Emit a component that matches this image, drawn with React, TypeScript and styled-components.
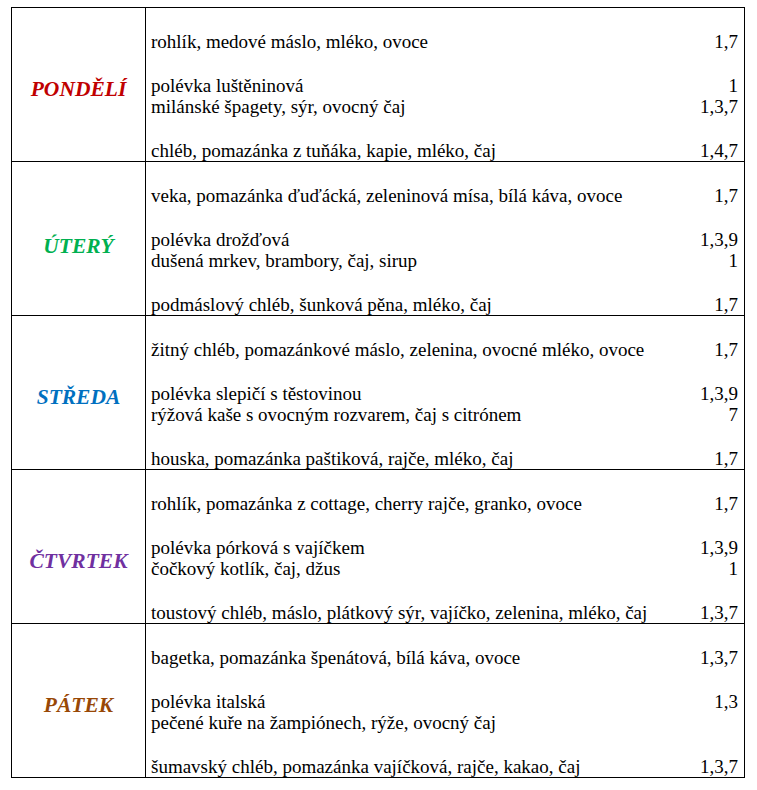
import React from "react";
import styled, { createGlobalStyle } from "styled-components";

const Global = createGlobalStyle`
  html, body { margin: 0; padding: 0; background: #ffffff; }
  body { font-family: "Liberation Serif", "Times New Roman", serif; color: #000; }
`;

const Page = styled.div`
  padding: 7px 0 0 11px;
  font-family: "Liberation Serif", "Times New Roman", serif;
`;

const Table = styled.div`
  box-sizing: border-box;
  width: 734px;
  border: 1px solid #000;
  display: flex;
  flex-direction: column;
`;

const DayRow = styled.div<{ $first?: boolean }>`
  display: grid;
  grid-template-columns: 134px 1fr;
  border-top: ${(p) => (p.$first ? "none" : "1px solid #000")};
  height: 153px;
  box-sizing: content-box;
`;

const LabelCell = styled.div<{ $drop: number }>`
  border-right: 1px solid #000;
  display: flex;
  align-items: center;
  justify-content: center;
  padding-top: ${(p) => p.$drop}px;
  box-sizing: border-box;
`;

const DayName = styled.span<{ $color: string }>`
  font-family: "Liberation Serif", "Times New Roman", serif;
  font-weight: bold;
  font-style: italic;
  font-size: 21.5px;
  color: ${(p) => p.$color};
`;

const MenuCell = styled.div`
  display: flex;
  flex-direction: column;
  padding: 1px 6px 0 5px;
`;

const Line = styled.div`
  display: flex;
  justify-content: space-between;
  font-family: "Liberation Serif", "Times New Roman", serif;
  font-size: 19px;
  line-height: 21.86px;
  height: 21.86px;
  white-space: nowrap;
  color: #000;
`;

const Meal = styled.span``;
const Allergens = styled.span``;

type Item = [string, string];

interface Day {
  name: string;
  color: string;
  drop: number;
  breakfast: Item;
  soup: Item;
  main: Item;
  snack: Item;
}

const days: Day[] = [
  {
    name: "PONDĚLÍ",
    color: "#c00000",
    drop: 9,
    breakfast: ["rohlík, medové máslo, mléko, ovoce", "1,7"],
    soup: ["polévka luštěninová", "1"],
    main: ["milánské špagety, sýr, ovocný čaj", "1,3,7"],
    snack: ["chléb, pomazánka z tuňáka, kapie, mléko, čaj", "1,4,7"],
  },
  {
    name: "ÚTERÝ",
    color: "#00b050",
    drop: 15,
    breakfast: ["veka, pomazánka ďuďácká, zeleninová mísa, bílá káva, ovoce", "1,7"],
    soup: ["polévka drožďová", "1,3,9"],
    main: ["dušená mrkev, brambory, čaj, sirup", "1"],
    snack: ["podmáslový chléb, šunková pěna, mléko, čaj", "1,7"],
  },
  {
    name: "STŘEDA",
    color: "#0070c0",
    drop: 9,
    breakfast: ["žitný chléb, pomazánkové máslo, zelenina, ovocné mléko, ovoce", "1,7"],
    soup: ["polévka slepičí s těstovinou", "1,3,9"],
    main: ["rýžová kaše s ovocným rozvarem, čaj s citrónem", "7"],
    snack: ["houska, pomazánka paštiková, rajče, mléko, čaj", "1,7"],
  },
  {
    name: "ČTVRTEK",
    color: "#7030a0",
    drop: 29,
    breakfast: ["rohlík, pomazánka z cottage, cherry rajče, granko, ovoce", "1,7"],
    soup: ["polévka pórková s vajíčkem", "1,3,9"],
    main: ["čočkový kotlík, čaj, džus", "1"],
    snack: ["toustový chléb, máslo, plátkový sýr, vajíčko, zelenina, mléko, čaj", "1,3,7"],
  },
  {
    name: "PÁTEK",
    color: "#984806",
    drop: 9,
    breakfast: ["bagetka, pomazánka špenátová, bílá káva, ovoce", "1,3,7"],
    soup: ["polévka italská", "1,3"],
    main: ["pečené kuře na žampiónech, rýže, ovocný čaj", ""],
    snack: ["šumavský chléb, pomazánka vajíčková, rajče, kakao, čaj", "1,3,7"],
  },
];

const MenuLine: React.FC<{ item?: Item }> = ({ item }) => (
  <Line>
    <Meal>{item ? item[0] : "\u00a0"}</Meal>
    <Allergens>{item ? item[1] : ""}</Allergens>
  </Line>
);

export default function App() {
  return (
    <>
      <Global />
      <Page>
        <Table>
          {days.map((d, i) => (
            <DayRow key={d.name} $first={i === 0}>
              <LabelCell $drop={d.drop}>
                <DayName $color={d.color}>{d.name}</DayName>
              </LabelCell>
              <MenuCell>
                <MenuLine />
                <MenuLine item={d.breakfast} />
                <MenuLine />
                <MenuLine item={d.soup} />
                <MenuLine item={d.main} />
                <MenuLine />
                <MenuLine item={d.snack} />
              </MenuCell>
            </DayRow>
          ))}
        </Table>
      </Page>
    </>
  );
}
